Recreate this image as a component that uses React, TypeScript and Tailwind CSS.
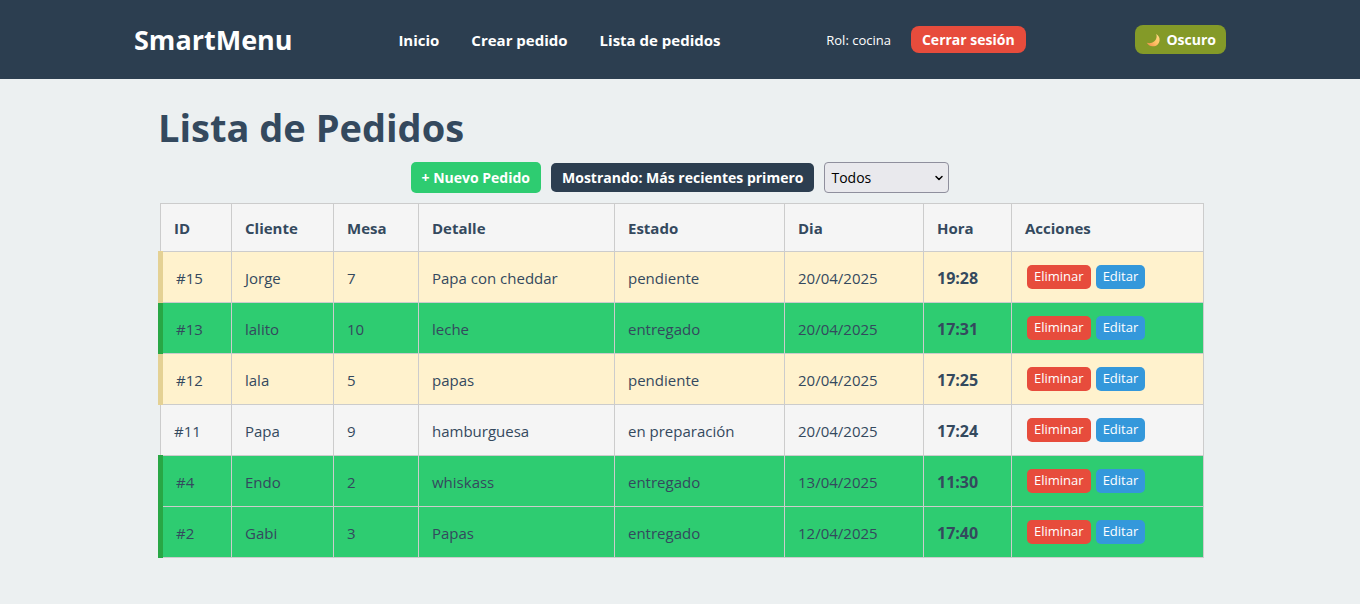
import { ChevronDown } from "lucide-react";

type Estado = "pendiente" | "entregado" | "en preparación";

type Pedido = {
  id: number;
  cliente: string;
  mesa: number;
  detalle: string;
  estado: Estado;
  dia: string;
  hora: string;
};

const pedidos: Pedido[] = [
  { id: 15, cliente: "Jorge", mesa: 7, detalle: "Papa con cheddar", estado: "pendiente", dia: "20/04/2025", hora: "19:28" },
  { id: 13, cliente: "lalito", mesa: 10, detalle: "leche", estado: "entregado", dia: "20/04/2025", hora: "17:31" },
  { id: 12, cliente: "lala", mesa: 5, detalle: "papas", estado: "pendiente", dia: "20/04/2025", hora: "17:25" },
  { id: 11, cliente: "Papa", mesa: 9, detalle: "hamburguesa", estado: "en preparación", dia: "20/04/2025", hora: "17:24" },
  { id: 4, cliente: "Endo", mesa: 2, detalle: "whiskass", estado: "entregado", dia: "13/04/2025", hora: "11:30" },
  { id: 2, cliente: "Gabi", mesa: 3, detalle: "Papas", estado: "entregado", dia: "12/04/2025", hora: "17:40" },
];

const columnas = [
  { titulo: "ID", ancho: "w-[71px]" },
  { titulo: "Cliente", ancho: "w-[102px]" },
  { titulo: "Mesa", ancho: "w-[85px]" },
  { titulo: "Detalle", ancho: "w-[196px]" },
  { titulo: "Estado", ancho: "w-[170px]" },
  { titulo: "Dia", ancho: "w-[139px]" },
  { titulo: "Hora", ancho: "w-[88px]" },
  { titulo: "Acciones", ancho: "w-[192px]" },
];

const filaColor: Record<Estado, string> = {
  pendiente: "bg-[#fff2cd]",
  entregado: "bg-[#2ecc71]",
  "en preparación": "bg-[#f5f5f5]",
};

const primeraCelda: Record<Estado, string> = {
  pendiente: "border-l-5 border-l-[#e4d194]",
  entregado: "border-l-5 border-l-[#28a745]",
  "en preparación": "",
};

const celda = "border border-[#ccc] px-[13px] pt-[2px]";

function Luna() {
  return (
    <svg viewBox="0 0 16 16" className="size-4" aria-hidden="true">
      <defs>
        <linearGradient id="luna" x1="0" y1="1" x2="1" y2="0">
          <stop offset="0" stopColor="#f08a4b" />
          <stop offset="0.5" stopColor="#ffc266" />
          <stop offset="1" stopColor="#ffd98a" />
        </linearGradient>
      </defs>
      <path d="M11.2 2c2.400 1.500 3.600 3.600 3.400 6.200-.3 3.900-3.400 6.300-7 6.100-2.700-.2-4.700-1.500-5.800-3.500 2.700.7 5.500.3 7.600-1.500 2.200-2 2.800-4.700 1.800-7.300z" fill="url(#luna)" />
    </svg>
  );
}

function Cabecera() {
  return (
    <header className="bg-[#2c3e50] px-6 text-white">
      <div className="mx-auto flex min-h-[79px] w-full max-w-[1092px] flex-wrap items-center justify-between gap-4">
        <span className="pt-[2px] text-[27px] font-bold">SmartMenu</span>
        <nav className="flex gap-8 pt-[2px] text-[15px] font-bold">
          <a href="#inicio">Inicio</a>
          <a href="#crear">Crear pedido</a>
          <a href="#lista">Lista de pedidos</a>
        </nav>
        <div className="mr-1 flex items-center gap-5 text-[13px]">
          <span className="pt-[2px]">Rol: cocina</span>
          <button type="button" className="h-[27px] rounded-lg bg-[#e74c3c] px-[11px] text-sm font-bold">
            Cerrar sesión
          </button>
        </div>
        <button type="button" className="flex h-[29px] items-center gap-[5px] rounded-lg bg-[#849a28] px-[10px] text-sm font-bold">
          <Luna />
          Oscuro
        </button>
      </div>
    </header>
  );
}

function Filtros() {
  return (
    <div className="flex flex-wrap items-center justify-center gap-[10px]">
      <button type="button" className="h-[31px] rounded-[5px] bg-[#2ecc71] px-[11px] text-sm font-bold text-white">
        + Nuevo Pedido
      </button>
      <button type="button" className="h-[29px] rounded-[5px] bg-[#2c3e50] px-[11px] text-sm font-bold text-white">
        Mostrando: Más recientes primero
      </button>
      <div className="grid w-[125px] items-center">
        <select
          aria-label="Filtrar por estado"
          className="col-start-1 row-start-1 h-[31px] appearance-none rounded-[4px] border border-[#8f8f9d] bg-[#e9e9ed] px-[6px] text-sm text-black"
        >
          <option>Todos</option>
          <option>pendiente</option>
          <option>en preparación</option>
          <option>entregado</option>
        </select>
        <ChevronDown className="pointer-events-none col-start-1 row-start-1 mr-1 size-3 justify-self-end text-black" strokeWidth={3} />
      </div>
    </div>
  );
}

function Tabla() {
  return (
    <table className="mt-[10px] w-full table-fixed border-collapse text-left text-[15px]">
      <thead>
        <tr className="h-12 bg-[#f5f5f5]">
          {columnas.map((c) => (
            <th key={c.titulo} scope="col" className={`${celda} ${c.ancho} font-bold`}>
              {c.titulo}
            </th>
          ))}
        </tr>
      </thead>
      <tbody>
        {pedidos.map((p) => (
          <tr key={p.id} className={`h-[51px] ${filaColor[p.estado]}`}>
            <td className={`${celda} ${primeraCelda[p.estado]}`}>#{p.id}</td>
            <td className={celda}>{p.cliente}</td>
            <td className={celda}>{p.mesa}</td>
            <td className={celda}>{p.detalle}</td>
            <td className={celda}>{p.estado}</td>
            <td className={celda}>{p.dia}</td>
            <td className={`${celda} text-base font-bold`}>{p.hora}</td>
            <td className="border border-[#ccc] px-[15px]">
              <div className="flex gap-[5px] text-[13px] text-white">
                <button type="button" className="h-6 rounded-[5px] bg-[#e74c3c] px-[7px]">
                  Eliminar
                </button>
                <button type="button" className="h-6 rounded-[5px] bg-[#3498db] px-[7px]">
                  Editar
                </button>
              </div>
            </td>
          </tr>
        ))}
      </tbody>
    </table>
  );
}

export default function App() {
  return (
    <div className="min-h-screen bg-[#ecf0f1] font-['Open_Sans','Noto_Sans',sans-serif] text-[#34495e]">
      <Cabecera />
      <main className="mx-auto w-full max-w-[1044px] py-6">
        <h1 className="mb-[10px] text-[38px] leading-[49px] font-bold">Lista de Pedidos</h1>
        <Filtros />
        <Tabla />
      </main>
    </div>
  );
}
